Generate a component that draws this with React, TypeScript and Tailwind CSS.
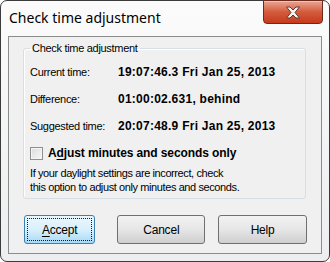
import React from 'react';

const ui = { fontFamily: '"Liberation Sans", Arial, sans-serif' };

function Button({ label, u, w, isDefault }: { label: string; u?: number; w: string; isDefault?: boolean }) {
  const text =
    u === undefined ? (
      label
    ) : (
      <>
        {label.slice(0, u)}
        <span className="underline underline-offset-2">{label[u]}</span>
        {label.slice(u + 1)}
      </>
    );
  return (
    <button
      className={`${w} h-[29px] rounded-[3px] border text-[12px] tracking-[-0.2px] text-black ${
        isDefault
          ? 'border-[#3c7fb1] bg-gradient-to-b from-[#eaf6fd] via-[#d9f0fc] to-[#a7d9f5] p-[2px]'
          : 'border-[#707070] bg-gradient-to-b from-[#f2f2f2] via-[#e6e6e6] to-[#cfcfcf]'
      }`}
      style={ui}
    >
      {isDefault ? (
        <span className="flex h-full w-full items-center justify-center border border-dotted border-[#1a1a1a]">
          {text}
        </span>
      ) : (
        text
      )}
    </button>
  );
}

function Row({ label, value, first }: { label: string; value: string; first?: boolean }) {
  return (
    <div className={`flex h-[13px] items-center leading-[13px] ${first ? 'mt-[11px]' : 'mt-[14px]'}`}>
      <span className="w-[88px]">{label}</span>
      <span className="text-[12px] font-bold tracking-[0.25px]">{value}</span>
    </div>
  );
}

export default function App() {
  return (
    <div className="h-[262px] w-[330px] bg-white">
      <div className="relative flex h-[262px] w-[330px] flex-col rounded-[7px] border border-[#3b3b3b] bg-gradient-to-b from-[#fbfbfb] to-[#eceeef] px-[7px] pb-[7px]">
        {/* title bar */}
        <div className="flex h-[35px] items-center pl-[1px] pb-[3px]">
          <span className="text-[14px] text-black" style={{ fontFamily: '"Noto Sans", "Open Sans", sans-serif' }}>
            Check time adjustment
          </span>
        </div>
        <div className="absolute right-[6px] top-[-1px] flex h-[24px] w-[60px] items-center justify-center rounded-b-[4px] border border-[#6b2a20] bg-gradient-to-b from-[#e8a593] via-[#d45a3c] to-[#c63a1c] shadow-[inset_0_1px_0_#f3c2b4]">
          <svg width="16" height="13" viewBox="0 0 16 13">
            <path
              d="M1.5 1h3.5l3 3 3-3h3.5l-4.5 5.5 4.5 5.5h-3.5l-3-3-3 3H1.5l4.5-5.5z"
              fill="#f4f4f4"
              stroke="#5a3a34"
              strokeWidth="1"
              strokeLinejoin="round"
            />
          </svg>
        </div>

        {/* client area */}
        <div className="flex flex-1 flex-col border border-[#8c8c8c] bg-[#f0f0f0] px-[14px] text-[11px] tracking-[-0.3px] text-black" style={ui}>
          <fieldset className="mt-[5px] mr-[1px] rounded-[3px] border border-[#d5dfe5] pb-[4px] pl-[6px] shadow-[inset_1px_1px_0_#ffffff]">
            <legend className="ml-[0px] px-[2px] text-[11px] leading-[13px]">Check time adjustment</legend>
            <Row first label="Current time:" value="19:07:46.3 Fri Jan 25, 2013" />
            <Row label="Difference:" value="01:00:02.631, behind" />
            <Row label="Suggested time:" value="20:07:48.9 Fri Jan 25, 2013" />
            <div className="mt-[14px] flex h-[13px] items-center">
              <span className="h-[13px] w-[13px] border border-[#8e8f8f] bg-gradient-to-br from-[#dcdcdc] to-[#f7f7f7] shadow-[inset_0_0_0_1px_#f4f4f4]" />
              <span className="ml-[5px] text-[12px] font-bold leading-[13px] tracking-[-0.1px]">
                A<span className="underline underline-offset-2">d</span>just minutes and seconds only
              </span>
            </div>
            <div className="mt-[6px] leading-[14px] tracking-[-0.4px]">
              <div>If your daylight settings are incorrect, check</div>
              <div>this option to adjust only minutes and seconds.</div>
            </div>
          </fieldset>

          <div className="mt-[16px] flex">
            <Button label="Accept" u={0} w="w-[73px] ml-[1px]" isDefault />
            <Button label="Cancel" w="w-[90px] ml-[22px]" />
            <Button label="Help" w="w-[91px] ml-[13px]" />
          </div>
        </div>
      </div>
    </div>
  );
}
